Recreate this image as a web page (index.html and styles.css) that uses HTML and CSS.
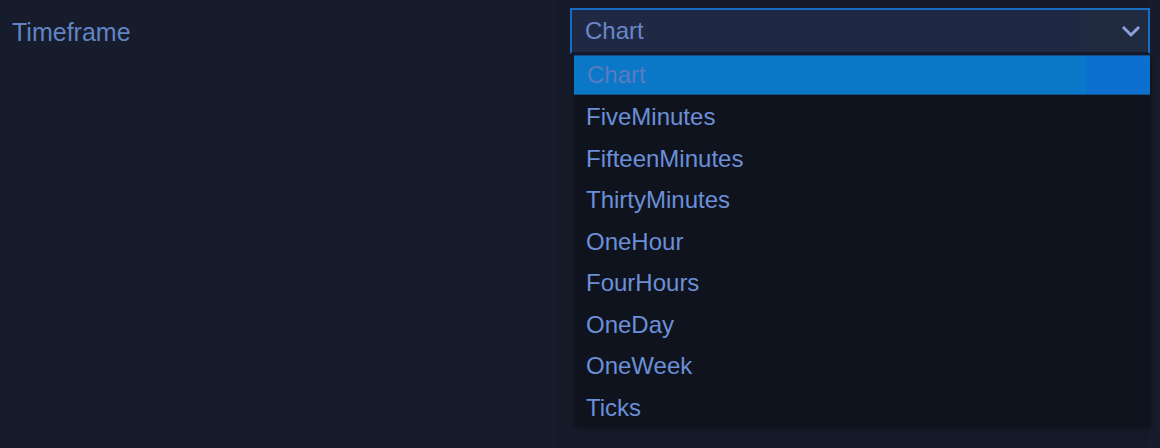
FILE: index.html
```html
<!DOCTYPE html>
<html>
<head>
<meta charset="utf-8">
<link rel="stylesheet" href="styles.css">
</head>
<body>
<div class="row">
  <div class="label">Timeframe</div>
  <div class="field">
    <div class="select">
      <div class="value">Chart</div>
      <div class="arrow">
        <svg width="20" height="14" viewBox="0 0 20 14"><path d="M2 3 L10 11 L18 3" fill="none" stroke="#8b9fdc" stroke-width="3" stroke-linejoin="miter"/></svg>
      </div>
    </div>
    <ul class="list">
      <li class="item selected"><span>Chart</span><span class="tail"></span></li>
      <li class="item">FiveMinutes</li>
      <li class="item">FifteenMinutes</li>
      <li class="item">ThirtyMinutes</li>
      <li class="item">OneHour</li>
      <li class="item">FourHours</li>
      <li class="item">OneDay</li>
      <li class="item">OneWeek</li>
      <li class="item">Ticks</li>
    </ul>
  </div>
</div>
</body>
</html>
```
FILE: styles.css
```css
html, body {
  margin: 0;
  padding: 0;
  background: #161c2b;
  width: 1160px;
  height: 448px;
  overflow: hidden;
  font-family: "Liberation Sans", Arial, sans-serif;
}
.row {
  display: flex;
  height: 448px;
}
.label {
  width: 556px;
  padding: 18px 0 0 12px;
  box-sizing: border-box;
  color: #6283c4;
  font-size: 25px;
  line-height: 28px;
}
.field {
  width: 594px;
  padding: 8px 0 0 14px;
  box-sizing: border-box;
  background: #141a28;
  position: relative;
}
.select {
  display: flex;
  height: 46px;
  width: 580px;
  box-sizing: border-box;
  border-top: 2px solid #1a6cc2;
  border-left: 2px solid #1a6cc2;
  border-right: 2px solid #1a6cc2;
  border-bottom: 2px solid #141c2e;
  background: #1f2944;
}
.value {
  flex: 1;
  color: #6a86c8;
  font-size: 24px;
  line-height: 42px;
  padding-left: 13px;
}
.arrow {
  width: 63px;
  background: #202b40;
  display: flex;
  align-items: center;
  justify-content: flex-end;
  padding-right: 7px;
  box-sizing: border-box;
}
.list {
  position: absolute;
  left: 18px;
  top: 55px;
  width: 576px;
  margin: 0;
  padding: 0;
  list-style: none;
  background: #0f131e;
  box-shadow: 2px 2px 4px rgba(0,0,0,0.35);
}
.item {
  height: 41.5px;
  line-height: 41.5px;
  padding-left: 12px;
  color: #6b8fd8;
  font-size: 24px;
  box-sizing: border-box;
}
.item:last-child { height: 39.5px; }
.item.selected {
  display: flex;
  padding-left: 0;
  height: 40px;
  line-height: 38px;
  border-top: 1px solid #15508c;
  border-bottom: 1px solid #15508c;
  background: #0a78c7;
  color: #5b7bc0;
  margin-bottom: 1px;
}
.item.selected span:first-child {
  flex: 1;
  padding-left: 13px;
}
.item.selected .tail {
  width: 64px;
  background: #0d70cf;
}
```
